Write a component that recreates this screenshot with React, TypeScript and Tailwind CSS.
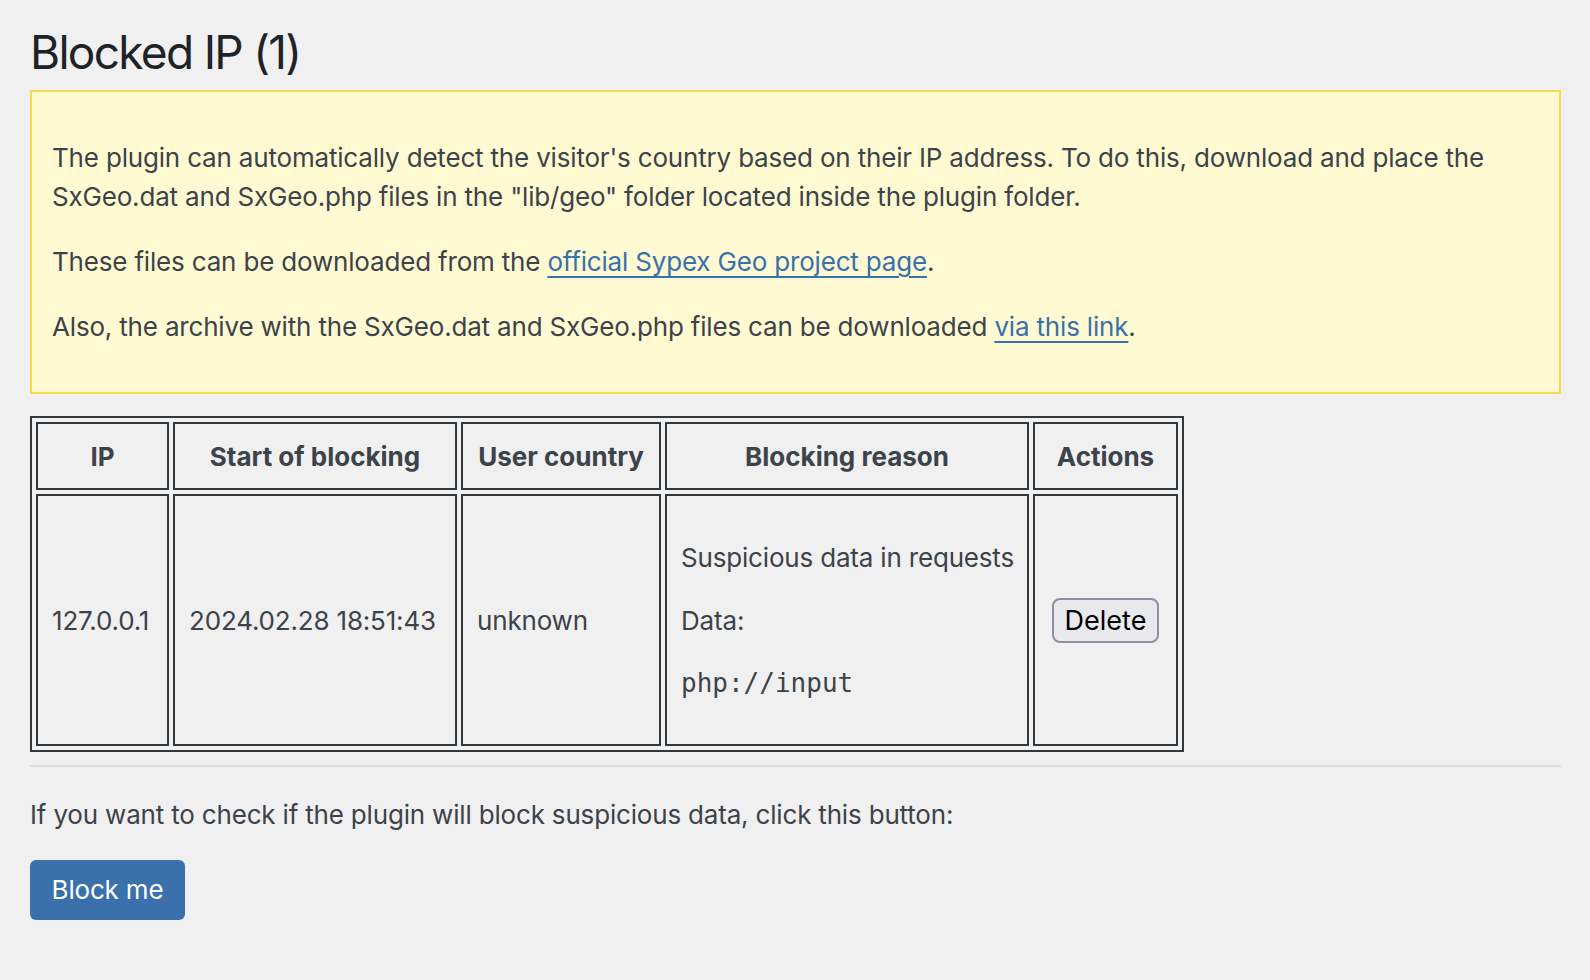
import React from 'react';

const cellBorder = 'border-2 border-[#32373c]';

const App = () => {
  return (
    <div className="min-h-screen bg-[#f0f0f1] pl-[30px] pr-[29px] pt-[24px] pb-[40px] font-['Inter','Liberation_Sans',sans-serif] text-[26px] leading-[39px] tracking-[-0.18px] text-[#3c434a]">
      <h1 className="text-[46px] font-normal leading-[56px] tracking-[-1.7px] text-[#1d2327]">Blocked IP (1)</h1>

      <div className="mt-[10px] border-2 border-[#fcd84c] bg-[#fffad1] px-[20px] py-[20px]">
        <p className="my-[26px]">
          The plugin can automatically detect the visitor's country based on their IP address. To do this, download and place the SxGeo.dat and SxGeo.php files in the "lib/geo" folder located inside the plugin folder.
        </p>
        <p className="my-[26px]">
          These files can be downloaded from the{' '}
          <a href="#" className="text-[#3771ae] underline decoration-[2px] underline-offset-[5px]">official Sypex Geo project page</a>.
        </p>
        <p className="my-[26px]">
          Also, the archive with the SxGeo.dat and SxGeo.php files can be downloaded{' '}
          <a href="#" className="text-[#3771ae] underline decoration-[2px] underline-offset-[5px]">via this link</a>.
        </p>
      </div>

      <table className="mt-[22px] table-fixed border-separate border-spacing-[4px] border-2 border-[#32373c]">
        <thead>
          <tr className="h-[68px]">
            <th className={`${cellBorder} w-[133px] text-center font-bold tracking-normal`}>IP</th>
            <th className={`${cellBorder} w-[284px] text-center font-bold tracking-normal`}>Start of blocking</th>
            <th className={`${cellBorder} w-[200px] text-center font-bold tracking-normal`}>User country</th>
            <th className={`${cellBorder} w-[364px] text-center font-bold tracking-normal`}>Blocking reason</th>
            <th className={`${cellBorder} w-[145px] text-center font-bold tracking-normal`}>Actions</th>
          </tr>
        </thead>
        <tbody>
          <tr className="h-[252px]">
            <td className={`${cellBorder} pl-[14px] align-middle whitespace-nowrap`}>127.0.0.1</td>
            <td className={`${cellBorder} pl-[14px] align-middle whitespace-nowrap`}>2024.02.28 18:51:43</td>
            <td className={`${cellBorder} pl-[14px] align-middle`}>unknown</td>
            <td className={`${cellBorder} pl-[14px] align-middle`}>
              <div className="flex flex-col gap-[24px] whitespace-nowrap">
                <p>Suspicious data in requests</p>
                <p>Data:</p>
                <p className="font-['DejaVu_Sans_Mono','Liberation_Mono',monospace] text-[26px] tracking-normal">php://input</p>
              </div>
            </td>
            <td className={`${cellBorder} text-center align-middle`}>
              <button className="h-[45px] w-[107px] rounded-[8px] border-2 border-[#8f8f9d] bg-[#e9e9ed] text-[27px] leading-none tracking-normal text-black">
                Delete
              </button>
            </td>
          </tr>
        </tbody>
      </table>

      <div className="mt-[13px] h-[2px] bg-[#dcdcde]" />

      <p className="mt-[28px]">If you want to check if the plugin will block suspicious data, click this button:</p>

      <button className="mt-[26px] h-[60px] w-[155px] rounded-[6px] bg-[#3a70ab] text-[26px] leading-none text-white">
        Block me
      </button>
    </div>
  );
};

export default App;
